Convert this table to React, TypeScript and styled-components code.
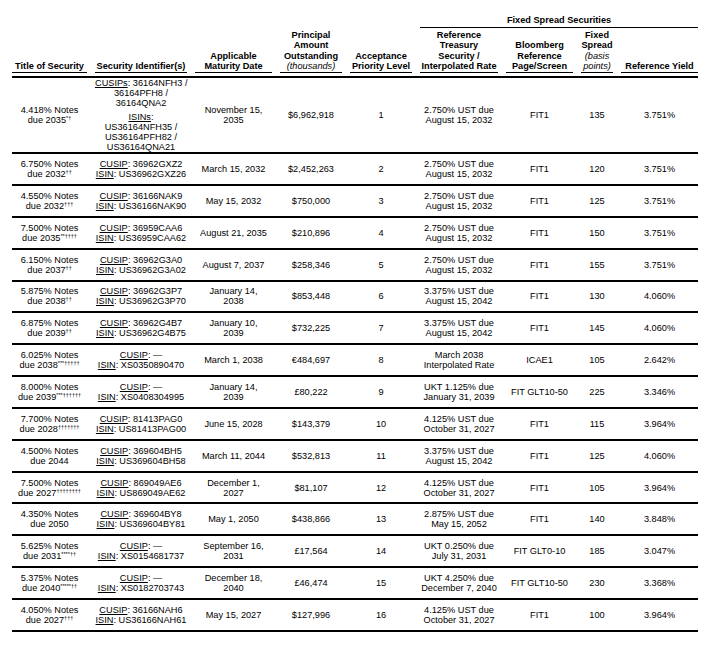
import React from 'react';
import styled, { createGlobalStyle } from 'styled-components';

const GlobalStyle = createGlobalStyle`
  html, body {
    margin: 0;
    padding: 0;
    background: #fff;
  }
  body {
    font-family: "Liberation Sans", Arial, sans-serif;
    color: #000;
  }
`

const Page = styled.div`
  width: 718px;
  box-sizing: border-box;
  padding: 15px 0 0 12px;
`

const Table = styled.table`
  width: 686px;
  table-layout: fixed;
  border-collapse: collapse;
  font-size: 9.2px;
  line-height: 10px;
`

const HeadCell = styled.th<{ $edge?: 'left' | 'right' }>`
  font-weight: bold;
  text-align: center;
  vertical-align: bottom;
  line-height: 10.3px;
  padding: 0 ${p => (p.$edge === 'right' ? 0 : 4)}px 3px ${p => (p.$edge === 'left' ? 0 : 4)}px;
  border-bottom: 2px solid #000;
`

const HeadLabel = styled.div`
  border-bottom: 1px solid #000;
  padding-bottom: 1px;
`

const GroupCell = styled.th`
  font-weight: bold;
  text-align: center;
  padding: 0 0 2px 4px;
`

const GroupLabel = styled.div`
  border-bottom: 1px solid #000;
  padding-bottom: 2px;
`

const Note = styled.i`
  font-weight: normal;
`

const Cell = styled.td<{ $edge?: 'left' | 'right'; $tight?: boolean }>`
  text-align: center;
  vertical-align: middle;
  padding: ${p => (p.$tight ? 0 : 4.93)}px ${p => (p.$edge === 'right' ? 0 : 4)}px ${p => (p.$tight ? 0 : 4.93)}px ${p => (p.$edge === 'left' ? 0 : 4)}px;
  border-bottom: 2px solid #000;
`

const Line = styled.div`
  white-space: nowrap;
`

const IdBlock = styled.div<{ $gap?: boolean }>`
  margin-top: ${p => (p.$gap ? 4 : 0)}px;
`

const Tag = styled.span`
  text-decoration: underline;
`

const Marks = styled.sup`
  font-size: 5.5px;
  line-height: 0;
  vertical-align: 3.5px;
`

type Security = {
  coupon: string
  due: string
  marks: string
  cusips: string[]
  isins: string[]
  maturity: string[]
  principal: string
  treasury: [string, string]
  screen: string
  spread: number
  refYield: string
}

const UST_2032: [string, string] = ['2.750% UST due', 'August 15, 2032']
const UST_2042: [string, string] = ['3.375% UST due', 'August 15, 2042']
const UST_2027: [string, string] = ['4.125% UST due', 'October 31, 2027']

const securities: Security[] = [
  { coupon: '4.418%', due: '2035', marks: '*†', cusips: ['36164NFH3', '36164PFH8', '36164QNA2'], isins: ['US36164NFH35', 'US36164PFH82', 'US36164QNA21'], maturity: ['November 15,', '2035'], principal: '$6,962,918', treasury: UST_2032, screen: 'FIT1', spread: 135, refYield: '3.751%' },
  { coupon: '6.750%', due: '2032', marks: '††', cusips: ['36962GXZ2'], isins: ['US36962GXZ26'], maturity: ['March 15, 2032'], principal: '$2,452,263', treasury: UST_2032, screen: 'FIT1', spread: 120, refYield: '3.751%' },
  { coupon: '4.550%', due: '2032', marks: '†††', cusips: ['36166NAK9'], isins: ['US36166NAK90'], maturity: ['May 15, 2032'], principal: '$750,000', treasury: UST_2032, screen: 'FIT1', spread: 125, refYield: '3.751%' },
  { coupon: '7.500%', due: '2035', marks: '**††††', cusips: ['36959CAA6'], isins: ['US36959CAA62'], maturity: ['August 21, 2035'], principal: '$210,896', treasury: UST_2032, screen: 'FIT1', spread: 150, refYield: '3.751%' },
  { coupon: '6.150%', due: '2037', marks: '††', cusips: ['36962G3A0'], isins: ['US36962G3A02'], maturity: ['August 7, 2037'], principal: '$258,346', treasury: UST_2032, screen: 'FIT1', spread: 155, refYield: '3.751%' },
  { coupon: '5.875%', due: '2038', marks: '††', cusips: ['36962G3P7'], isins: ['US36962G3P70'], maturity: ['January 14,', '2038'], principal: '$853,448', treasury: UST_2042, screen: 'FIT1', spread: 130, refYield: '4.060%' },
  { coupon: '6.875%', due: '2039', marks: '††', cusips: ['36962G4B7'], isins: ['US36962G4B75'], maturity: ['January 10,', '2039'], principal: '$732,225', treasury: UST_2042, screen: 'FIT1', spread: 145, refYield: '4.060%' },
  { coupon: '6.025%', due: '2038', marks: '***†††††', cusips: ['—'], isins: ['XS0350890470'], maturity: ['March 1, 2038'], principal: '€484,697', treasury: ['March 2038', 'Interpolated Rate'], screen: 'ICAE1', spread: 105, refYield: '2.642%' },
  { coupon: '8.000%', due: '2039', marks: '***††††††', cusips: ['—'], isins: ['XS0408304995'], maturity: ['January 14,', '2039'], principal: '£80,222', treasury: ['UKT 1.125% due', 'January 31, 2039'], screen: 'FIT GLT10-50', spread: 225, refYield: '3.346%' },
  { coupon: '7.700%', due: '2028', marks: '†††††††', cusips: ['81413PAG0'], isins: ['US81413PAG00'], maturity: ['June 15, 2028'], principal: '$143,379', treasury: UST_2027, screen: 'FIT1', spread: 115, refYield: '3.964%' },
  { coupon: '4.500%', due: '2044', marks: '', cusips: ['369604BH5'], isins: ['US369604BH58'], maturity: ['March 11, 2044'], principal: '$532,813', treasury: UST_2042, screen: 'FIT1', spread: 125, refYield: '4.060%' },
  { coupon: '7.500%', due: '2027', marks: '††††††††', cusips: ['869049AE6'], isins: ['US869049AE62'], maturity: ['December 1,', '2027'], principal: '$81,107', treasury: UST_2027, screen: 'FIT1', spread: 105, refYield: '3.964%' },
  { coupon: '4.350%', due: '2050', marks: '', cusips: ['369604BY8'], isins: ['US369604BY81'], maturity: ['May 1, 2050'], principal: '$438,866', treasury: ['2.875% UST due', 'May 15, 2052'], screen: 'FIT1', spread: 140, refYield: '3.848%' },
  { coupon: '5.625%', due: '2031', marks: '****††', cusips: ['—'], isins: ['XS0154681737'], maturity: ['September 16,', '2031'], principal: '£17,564', treasury: ['UKT 0.250% due', 'July 31, 2031'], screen: 'FIT GLT0-10', spread: 185, refYield: '3.047%' },
  { coupon: '5.375%', due: '2040', marks: '*****††', cusips: ['—'], isins: ['XS0182703743'], maturity: ['December 18,', '2040'], principal: '£46,474', treasury: ['UKT 4.250% due', 'December 7, 2040'], screen: 'FIT GLT10-50', spread: 230, refYield: '3.368%' },
  { coupon: '4.050%', due: '2027', marks: '†††', cusips: ['36166NAH6'], isins: ['US36166NAH61'], maturity: ['May 15, 2027'], principal: '$127,996', treasury: UST_2027, screen: 'FIT1', spread: 100, refYield: '3.964%' },
]

const columnWidths = [79, 100, 85, 70, 70, 86, 75, 40, 81]

function Identifiers({ cusips, isins }: { cusips: string[]; isins: string[] }) {
  if (cusips.length === 1) {
    return (
      <>
        <Line><Tag>CUSIP</Tag>: {cusips[0]}</Line>
        <Line><Tag>ISIN</Tag>: {isins[0]}</Line>
      </>
    )
  }
  const joined = (list: string[], i: number) => list[i] + (i < list.length - 1 ? ' /' : '')
  return (
    <>
      <IdBlock>
        <Line><Tag>CUSIPs</Tag>: {joined(cusips, 0)}</Line>
        {cusips.slice(1).map((c, i) => <Line key={c}>{joined(cusips, i + 1)}</Line>)}
      </IdBlock>
      <IdBlock $gap>
        <Line><Tag>ISINs</Tag>:</Line>
        {isins.map((c, i) => <Line key={c}>{joined(isins, i)}</Line>)}
      </IdBlock>
    </>
  )
}

export default function App() {
  return (
    <Page>
      <GlobalStyle />
      <Table>
        <colgroup>
          {columnWidths.map((w, i) => <col key={i} style={{ width: w }} />)}
        </colgroup>
        <thead>
          <tr>
            <HeadCell rowSpan={2} $edge="left"><HeadLabel>Title of Security</HeadLabel></HeadCell>
            <HeadCell rowSpan={2}><HeadLabel>Security Identifier(s)</HeadLabel></HeadCell>
            <HeadCell rowSpan={2}><HeadLabel>Applicable<br />Maturity Date</HeadLabel></HeadCell>
            <HeadCell rowSpan={2}><HeadLabel>Principal<br />Amount<br />Outstanding<br /><Note>(thousands)</Note></HeadLabel></HeadCell>
            <HeadCell rowSpan={2}><HeadLabel>Acceptance<br />Priority Level</HeadLabel></HeadCell>
            <GroupCell colSpan={4}><GroupLabel>Fixed Spread Securities</GroupLabel></GroupCell>
          </tr>
          <tr>
            <HeadCell><HeadLabel>Reference<br />Treasury<br />Security /<br />Interpolated Rate</HeadLabel></HeadCell>
            <HeadCell><HeadLabel>Bloomberg<br />Reference<br />Page/Screen</HeadLabel></HeadCell>
            <HeadCell><HeadLabel>Fixed<br />Spread<br /><Note>(basis<br />points)</Note></HeadLabel></HeadCell>
            <HeadCell $edge="right"><HeadLabel>Reference Yield</HeadLabel></HeadCell>
          </tr>
        </thead>
        <tbody>
          {securities.map((s, i) => (
            <tr key={s.coupon + s.due}>
              <Cell $edge="left">
                <Line>{s.coupon} Notes</Line>
                <Line>due {s.due}{s.marks && <Marks>{s.marks}</Marks>}</Line>
              </Cell>
              <Cell $tight={s.cusips.length > 1}>
                <Identifiers cusips={s.cusips} isins={s.isins} />
              </Cell>
              <Cell>{s.maturity.map(m => <Line key={m}>{m}</Line>)}</Cell>
              <Cell>{s.principal}</Cell>
              <Cell>{i + 1}</Cell>
              <Cell>{s.treasury.map(t => <Line key={t}>{t}</Line>)}</Cell>
              <Cell>{s.screen}</Cell>
              <Cell>{s.spread}</Cell>
              <Cell $edge="right">{s.refYield}</Cell>
            </tr>
          ))}
        </tbody>
      </Table>
    </Page>
  )
}
